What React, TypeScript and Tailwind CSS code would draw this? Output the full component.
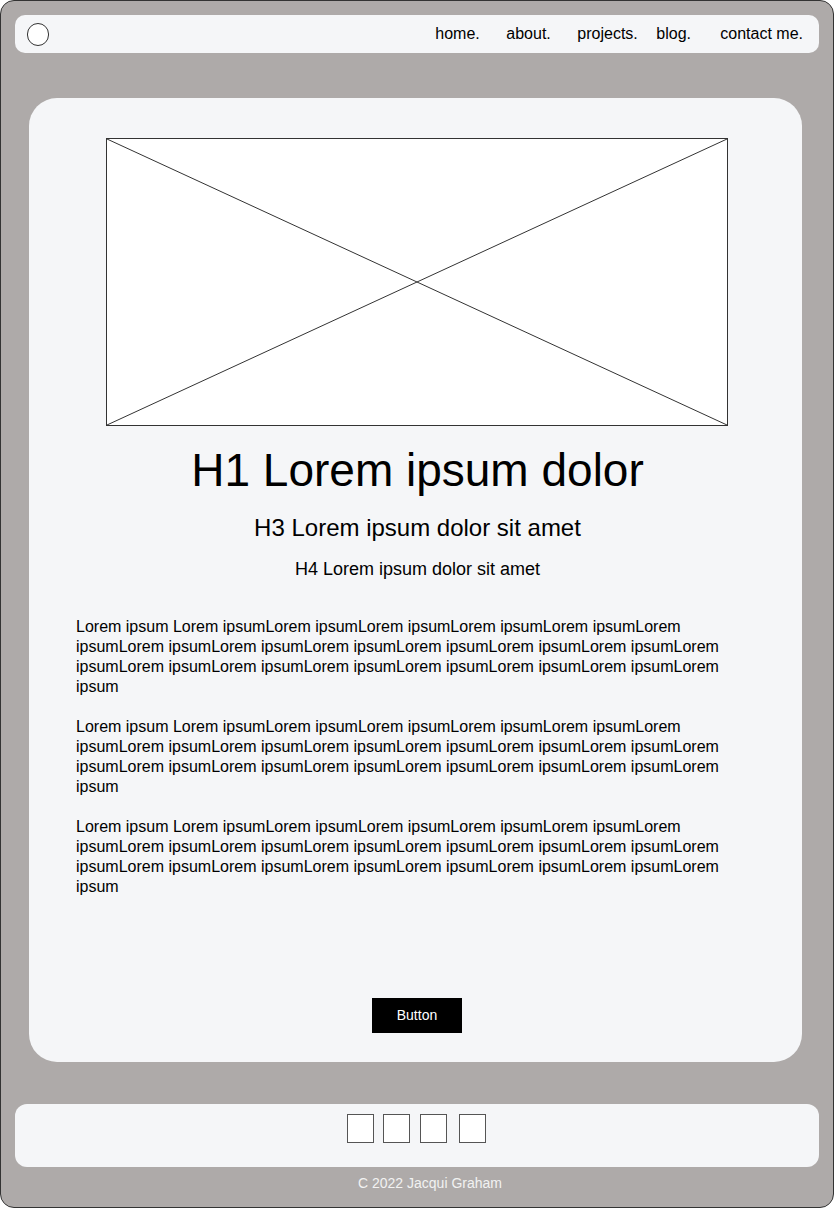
import React from "react";

const lorem =
  "Lorem ipsum Lorem " + Array(19).fill("ipsumLorem").join(" ") + " ipsum";

export default function App() {
  const font = { fontFamily: '"Liberation Sans", Arial, sans-serif' };
  return (
    <div style={font} className="w-[834px] h-[1209px] bg-white">
      <div className="w-[834px] h-[1208px] bg-[#aeaaa9] border border-[#333333] rounded-[14px] flex flex-col px-[14px] pt-[14px]">
        {/* nav */}
        <div className="h-[38px] w-[804px] bg-[#f5f6f8] rounded-[10px] flex items-center pl-[12px] pr-[16px]">
          <div className="w-[22px] h-[23px] rounded-full border border-[#333333] bg-white" />
          <div className="ml-auto flex items-center text-[16px] text-black leading-none">
            <span className="w-[71px]">home.</span>
            <span className="w-[71px]">about.</span>
            <span className="w-[79px]">projects.</span>
            <span className="w-[64px]">blog.</span>
            <span>contact me.</span>
          </div>
        </div>

        {/* main card */}
        <div className="mt-[45px] ml-[14px] w-[773px] h-[964px] bg-[#f5f6f8] rounded-[28px] flex flex-col items-center pt-[40px]">
          <div className="w-[622px] h-[288px] bg-white border border-[#333333] ml-[2px]">
            <svg width="620" height="286" viewBox="0 0 620 286" className="block">
              <line x1="0" y1="0" x2="620" y2="286" stroke="#333333" strokeWidth="1" />
              <line x1="620" y1="0" x2="0" y2="286" stroke="#333333" strokeWidth="1" />
            </svg>
          </div>
          <h1 className="mt-[18px] text-[46px] leading-[52px] text-black ml-[4px]">H1 Lorem ipsum dolor</h1>
          <h3 className="mt-[18px] text-[24px] leading-[28px] text-black ml-[4px]">H3 Lorem ipsum dolor sit amet</h3>
          <h4 className="mt-[16px] text-[18px] leading-[22px] text-black ml-[4px]">H4 Lorem ipsum dolor sit amet</h4>
          <div className="mt-[37px] self-start ml-[47px] w-[650px] text-[16px] leading-[20px] text-black flex flex-col gap-[20px]">
            <p>{lorem}</p>
            <p>{lorem}</p>
            <p>{lorem}</p>
          </div>
          <button className="mt-auto mb-[29px] w-[90px] h-[35px] bg-black text-white text-[14px] ml-[3px]">
            Button
          </button>
        </div>

        {/* footer */}
        <div className="mt-[42px] h-[63px] w-[804px] bg-[#f5f6f8] rounded-[12px] flex items-start justify-center pt-[10px]">
          <div className="flex gap-[9px] mr-[2px]">
            <div className="w-[27px] h-[29px] bg-white border border-[#555555]" />
            <div className="w-[27px] h-[29px] bg-white border border-[#555555]" />
            <div className="w-[27px] h-[29px] bg-white border border-[#555555] ml-[1px]" />
            <div className="w-[27px] h-[29px] bg-white border border-[#555555] ml-[3px]" />
          </div>
        </div>
        <div className="mt-[8px] text-center text-[14px] leading-[16px] text-[#f2f2f2] ml-[26px]">C 2022 Jacqui Graham</div>
      </div>
    </div>
  );
}
